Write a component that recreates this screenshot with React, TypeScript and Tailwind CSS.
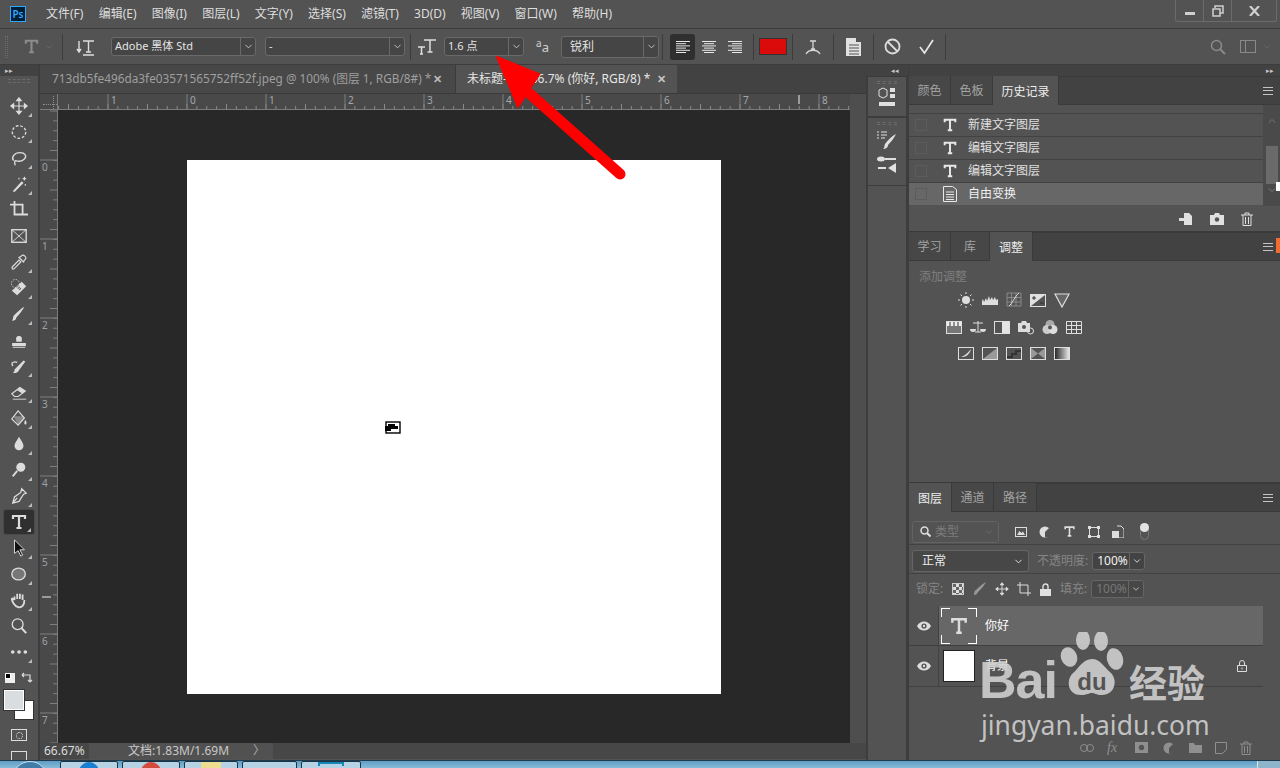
import type { ReactNode } from "react"
import { ChevronDown, ChevronUp } from "lucide-react"

const MENUS = ["文件(F)", "编辑(E)", "图像(I)", "图层(L)", "文字(Y)", "选择(S)", "滤镜(T)", "3D(D)", "视图(V)", "窗口(W)", "帮助(H)"]

function Ico({ children, size = 20, vb = 20, className = "" }: { children: ReactNode; size?: number; vb?: number; className?: string }) {
  return (
    <svg width={size} height={size} viewBox={`0 0 ${vb} ${vb}`} fill="none" stroke="currentColor" strokeWidth={1.5} className={`shrink-0 ${className}`}>
      {children}
    </svg>
  )
}

const TIcon = ({ size = 18 }: { size?: number }) => (
  <Ico size={size} vb={18}>
    <path d="M3 6V3h12v3M9 3v12M6.5 15h5" strokeWidth={2.2} />
  </Ico>
)

const TOOLS: { icon: ReactNode; corner?: boolean; active?: boolean }[] = [
  { icon: <path d="M10 2v16M2 10h16M10 1l-2.5 3h5zM10 19l-2.5-3h5zM1 10l3-2.5v5zM19 10l-3-2.5v5z" fill="currentColor" strokeWidth={1.3} /> },
  { icon: <ellipse cx="10" cy="10" rx="7.5" ry="7" strokeDasharray="3 2" /> },
  { icon: <path d="M4 13c-3-4 1-9 7-9s8 4 5 7-7 3-10 2c-2 1 0 5 0 5" /> },
  { icon: <><path d="M3 18L13 7l2 2L5 19z" fill="currentColor" stroke="none" /><path d="M16 2v4M14 4h4M10 3v2M17 10v2" strokeWidth={1.2} /></> },
  { icon: <path d="M0 4h14v12M5 0v15h15" strokeWidth={2} />, corner: false },
  { icon: <><rect x="2" y="3" width="16" height="14" /><path d="M2 3l16 14M18 3L2 17" strokeWidth={1} /></>, corner: false },
  { icon: <path d="M3 18c-1-1-1-2 0-3l7-7 2 2-7 7c-1 1-1 1-2 1zM10 5l5 5 1-2 1-1c2-2-2-6-4-4l-1 1z" strokeWidth={1.3} /> },
  { icon: <><path d="M2 13L13 3l5 5L8 18z" fill="currentColor" stroke="none" /><path d="M8 8l4 4" stroke="#535353" strokeWidth={3} strokeDasharray="1 1" /><circle cx="6" cy="5" r="4.5" strokeDasharray="1.5 1.5" strokeWidth={1} /></> },
  { icon: <path d="M4 12c3-3 8-8 12-10-2 4-6 9-9 12 0 3-3 4-5 3 2-1 1-3 2-5z" fill="currentColor" stroke="none" /> },
  { icon: <><path d="M7 10c-2-6 8-6 6 0v2H7z" fill="currentColor" stroke="none" /><path d="M3 14h14v2H3zM3 18h14" fill="currentColor" strokeWidth={1.2} /></>, corner: false },
  { icon: <><path d="M5 14L15 4l2 1-8 11c-2 2-5 2-6 1 2 0 2-1 2-3z" fill="currentColor" stroke="none" /><path d="M2 7c2-2 4-2 6-1M2 7l1 3" /></> },
  { icon: <><path d="M2 12l9-7 6 4-8 6H5z" strokeWidth={1.3} /><path d="M11 5l6 4-3 3-6-4z" fill="currentColor" stroke="none" /><path d="M3 18h15" strokeWidth={1} /></> },
  { icon: <><path d="M9 2L2 11l7 7 7-8z" strokeWidth={1.3} /><path d="M4 8h11l1 2-7 8z" fill="currentColor" stroke="none" opacity={0.4} /><path d="M17 12c1 2 2 3 1 5-2 1-3-1-1-5z" fill="currentColor" stroke="none" /></> },
  { icon: <path d="M10 2c2 4 5 7 5 10a5 5 0 0 1-10 0c0-3 3-6 5-10z" fill="currentColor" stroke="none" /> },
  { icon: <><circle cx="12" cy="7" r="5" fill="currentColor" stroke="none" /><path d="M8 11l-5 6" strokeWidth={2} /></> },
  { icon: <path d="M13 2l5 5-3 1-5 8-7 2 2-7 7-5zM3 18l5-6M10 10h.1" strokeWidth={1.4} /> },
  { icon: <TIcon size={20} />, active: true },
  { icon: <path d="M5 1v15l4-3 3 6 2-1-3-6h5z" fill="#111" stroke="#e4e4e4" strokeWidth={1} /> },
  { icon: <ellipse cx="9.5" cy="10" rx="7.5" ry="6.5" fill="#777" /> },
  { icon: <path d="M5 10V6M8 9V3M11 9V3M14 10V4M5 10c0 0-3-3-3-1s3 8 7 9 7-2 7-8" strokeWidth={2} /> },
  { icon: <><circle cx="8.5" cy="8" r="6" /><path d="M13 12.5l5 5.5" strokeWidth={2.2} /></>, corner: false },
  { icon: <path d="M3 10h.1M10 10h.1M17 10h.1" strokeWidth={4} strokeLinecap="round" /> },
]

function Toolbar() {
  return (
    <div className="w-[40px] shrink-0 flex flex-col overflow-hidden bg-[#535353] border-r-2 border-[#3d3d3d] text-[#dcdcdc]">
      <div className="h-[11px] shrink-0 bg-[#424242] text-[7px] leading-[11px] pl-[5px] text-[#c8c8c8]">▸▸</div>
      <div className="h-[17px] shrink-0 flex justify-center pt-[3px]">
        <div className="w-[22px] h-[4px] border-y border-[#6a6a6a] border-dashed" />
      </div>
      {TOOLS.map((t, i) => (
        <div key={i} className={`relative h-[26px] shrink-0 flex items-center justify-center mx-[3px] ${t.active ? "bg-[#303030] rounded-[3px] border border-[#4a4a4a]" : ""}`}>
          <Ico size={18}>{t.icon}</Ico>
          {t.corner !== false && (
            <svg width="4" height="4" viewBox="0 0 4 4" className="absolute right-[3px] bottom-[2px]"><path d="M4 0v4H0z" fill="#bbb" /></svg>
          )}
        </div>
      ))}
      <div className="h-[18px] shrink-0 flex items-center justify-between px-[5px] mt-[4px]">
        <div className="relative w-[10px] h-[10px] bg-[#eee]"><div className="w-[6px] h-[6px] bg-black border border-white" /></div>
        <Ico size={12} vb={12}><path d="M1 3h8v7M1 3l2-2M1 3l2 2M9 10l-2-2M9 10l2-2" strokeWidth={1.2} /></Ico>
      </div>
      <div className="relative h-[30px] shrink-0 mt-[3px] ml-[4px]">
        <div className="absolute left-[10px] top-[10px] w-[20px] h-[20px] bg-white border border-[#333]" />
        <div className="absolute left-0 top-0 w-[20px] h-[20px] bg-[#d9dde0] border border-white outline outline-1 outline-[#333]" />
      </div>
      <div className="flex justify-center shrink-0 mt-[9px]">
        <div className="w-[16px] h-[12px] border border-[#ddd] flex items-center justify-center"><div className="w-[7px] h-[7px] rounded-full border border-dotted border-[#ddd]" /></div>
      </div>
      <div className="flex justify-center shrink-0 mt-[10px]">
        <div className="w-[16px] h-[12px] border border-[#ddd]" />
      </div>
    </div>
  )
}

function Select({ label, w, h = 19, ml = 0, arrowW = 15, textClass = "text-[11px] pl-[3px]" }: { label: string; w: number; h?: number; ml?: number; arrowW?: number; textClass?: string }) {
  return (
    <div style={{ width: w, height: h, marginLeft: ml }} className="shrink-0 flex items-center rounded-[3px] border border-[#696969] bg-[#454545]">
      <span className={`flex-1 text-[#e4e4e4] whitespace-nowrap overflow-hidden ${textClass}`}>{label}</span>
      <span style={{ width: arrowW }} className="h-full border-l border-[#696969] flex items-center justify-center text-[#c8c8c8]">
        <ChevronDown size={11} />
      </span>
    </div>
  )
}

const Sep = ({ ml }: { ml: number }) => <div style={{ marginLeft: ml }} className="w-px h-[26px] bg-[#3c3c3c] shrink-0" />

function AlignIcon({ mode }: { mode: "l" | "c" | "r" }) {
  const rows = [14, 10, 14, 10, 14, 10]
  return (
    <svg width="16" height="14" viewBox="0 0 16 14" stroke="#e8e8e8" strokeWidth="1">
      {rows.map((w, i) => {
        const x = mode === "l" ? 1 : mode === "c" ? (16 - w) / 2 : 15 - w
        return <line key={i} x1={x} x2={x + w} y1={1.5 + i * 2.2} y2={1.5 + i * 2.2} />
      })}
    </svg>
  )
}

function OptionsBar() {
  return (
    <div className="h-[37px] shrink-0 flex items-center bg-[#535353] border-t border-[#3d3d3d] border-b border-b-[#3d3d3d]">
      <div className="ml-[5px] w-[3px] h-[22px] border-x border-dotted border-[#6c6c6c] shrink-0" />
      <div className="ml-[15px] text-[#8c8c8c]"><TIcon size={17} /></div>
      <ChevronDown size={10} className="ml-[4px] text-[#707070] shrink-0" />
      <Sep ml={8} />
      <div className="ml-[13px] w-[20px] text-[#dedede] shrink-0">
        <Ico size={20}>
          <path d="M7 4h11M12.5 4v11M10 15h5M3 4v10M1 12l2 3 2-3M7 18h11" strokeWidth={1.4} />
        </Ico>
      </div>
      <Select label="Adobe 黑体 Std" w={145} ml={15} />
      <Select label="-" w={140} ml={9} />
      <Sep ml={5} />
      <div className="ml-[6px] text-[#dedede] shrink-0">
        <Ico size={20}>
          <path d="M7 3h12M13 3v12M10.5 15h5M1 10h7M4.500 10v7M3 17h3" strokeWidth={1.5} />
        </Ico>
      </div>
      <Select label="1.6 点" w={80} ml={7} textClass="text-[11px] pl-[3px]" />
      <div className="ml-[12px] w-[15px] text-[11px] leading-none text-[#d0d0d0] shrink-0 -mt-[4px]">
        <span className="align-top text-[10px]">a</span><span className="text-[13px] relative top-[3px]">a</span>
      </div>
      <Select label="锐利" w={98} h={22} ml={10} textClass="text-[12px] pl-[8px]" />
      <Sep ml={3} />
      <div className="ml-[7px] w-[25px] h-[26px] bg-[#2f2f2f] rounded-[3px] flex items-center justify-center shrink-0"><AlignIcon mode="l" /></div>
      <div className="ml-[4px] w-[20px] flex justify-center shrink-0"><AlignIcon mode="c" /></div>
      <div className="ml-[6px] w-[20px] flex justify-center shrink-0"><AlignIcon mode="r" /></div>
      <Sep ml={8} />
      <div className="ml-[5px] w-[28px] h-[17px] bg-[#dc0b0b] border border-[#333] shrink-0" />
      <Sep ml={5} />
      <div className="ml-[11px] text-[#d6d6d6] shrink-0">
        <Ico size={18} vb={18}><path d="M6 3h6M9 3v8M7 11h4M2 16c3-5 11-5 14 0" strokeWidth={1.3} /></Ico>
      </div>
      <Sep ml={11} />
      <div className="ml-[11px] shrink-0 text-[#e2e2e2]">
        <svg width="17" height="20" viewBox="0 0 17 20"><path d="M1 1h10v4h5v14H1z" fill="currentColor" /><path d="M4 8h10M4 11h10M4 14h10M4 17h10" stroke="#535353" /></svg>
      </div>
      <Sep ml={11} />
      <div className="ml-[10px] text-[#dcdcdc] shrink-0">
        <Ico size={17} vb={17}><circle cx="8.500" cy="8.500" r="7" strokeWidth={1.8} /><path d="M3.500 3.500l10 10" strokeWidth={1.8} /></Ico>
      </div>
      <div className="ml-[17px] text-[#e6e6e6] shrink-0">
        <Ico size={17} vb={17}><path d="M2 9l4.500 6L15 2" strokeWidth={1.7} /></Ico>
      </div>
      <Sep ml={10} />
      <div className="flex-1" />
      <div className="text-[#8a8a8a] shrink-0">
        <Ico size={16} vb={16}><circle cx="6.500" cy="6.500" r="5" /><path d="M10 10l5 5" strokeWidth={2} /></Ico>
      </div>
      <div className="ml-[14px] w-[16px] h-[13px] border border-[#8a8a8a] shrink-0"><div className="w-[5px] h-full border-r border-[#8a8a8a]" /></div>
      <ChevronDown size={10} className="ml-[6px] mr-[8px] text-[#6c6c6c] shrink-0" />
    </div>
  )
}

function HRuler() {
  const ticks = []
  const labels = ["1", "0", "1", "2", "3", "4", "5", "6", "7", "8"]
  for (let i = 0; i < 84; i++) {
    const x = 108 - 40 - 18 - 9.875 * 6 + i * 9.875
    if (x >= 0) ticks.push(<line key={i} x1={x} x2={x} y1={i % 4 === 2 ? 10 : 12} y2={16} stroke="#8a8a8a" />)
  }
  return (
    <svg width="792" height="16" className="block bg-[#494949]">
      {ticks}
      {labels.map((l, i) => {
        const x = 50 + i * 79
        return (
          <g key={i}>
            <line x1={x} x2={x} y1={0} y2={16} stroke="#7e7e7e" />
            <text x={x + 3} y={10} fontSize="10" fill={i === 0 ? "#a9a9a9" : "#a4a8ac"} fontFamily="Noto Sans">{l}</text>
          </g>
        )
      })}
      <line x1={741} x2={741} y1={1} y2={10} stroke="#eee" />
      <line x1="0" x2="792" y1="15.500" y2="15.500" stroke="#7c7c7c" />
    </svg>
  )
}

function VRuler() {
  const ticks = []
  for (let i = 0; i < 66; i++) {
    const y = i * 9.875 + 1
    ticks.push(<line key={i} x1={(i + 1) % 4 === 1 ? 10 : 13} x2={18} y1={y} y2={y} stroke="#7e7e7e" />)
  }
  return (
    <svg width="18" height="633" className="block bg-[#494949] shrink-0">
      {ticks}
      {["0", "1", "2", "3", "4", "5", "6", "7"].map((l, i) => {
        const y = 50 + i * 79
        return (
          <g key={i}>
            <line x1={0} x2={18} y1={y} y2={y} stroke="#7e7e7e" />
            <text x={2} y={y + 11} fontSize="10" fill="#9aa2ab" fontFamily="Noto Sans">{l}</text>
          </g>
        )
      })}
      <line x1={2} x2={11} y1={487} y2={487} stroke="#eee" />
      <line x1="17.500" x2="17.500" y1="0" y2="633" stroke="#7c7c7c" />
    </svg>
  )
}

function Document() {
  return (
    <div className="w-[826px] shrink-0 flex flex-col bg-[#535353]">
      <div className="h-[29px] flex bg-[#424242] text-[12px] border-b border-[#3a3a3a]">
        <div className="w-[416px] flex items-center pl-[12px] bg-[#484848] text-[#9f9f9f] border-r border-[#3a3a3a] whitespace-nowrap">
          <span className="flex-1 text-[11.8px]">713db5fe496da3fe03571565752ff52f.jpeg @ 100% (图层 1, RGB/8#) *</span>
          <span className="w-[22px] text-[#bbb] text-[11px] font-bold">✕</span>
        </div>
        <div className="w-[221px] flex items-center pl-[11px] bg-[#535353] text-[#e6e6e6] whitespace-nowrap">
          <span className="flex-1">未标题-1 @ 66.7% (你好, RGB/8) *</span>
          <span className="w-[20px] text-[#c4c4c4] text-[11px] font-bold">✕</span>
        </div>
      </div>
      <div className="flex h-[16px]">
        <div className="relative w-[18px] h-[16px] bg-[#494949] shrink-0 border-b border-r border-[#7c7c7c]">
          <div className="absolute left-[3px] right-0 top-[10px] border-t border-dotted border-[#8c8c8c]" />
          <div className="absolute top-[2px] bottom-0 left-[13px] border-l border-dotted border-[#8c8c8c]" />
        </div>
        <HRuler />
        <div className="flex-1 bg-[#4e4e4e]" />
      </div>
      <div className="flex h-[633px]">
        <VRuler />
        <div className="w-[792px] h-full bg-[#282828] pl-[129px] pt-[50px] shrink-0">
          <div className="relative w-[534px] h-[534px] bg-white">
            <svg width="16" height="13" viewBox="0 0 16 13" className="absolute left-[198px] top-[261px]">
              <rect x="1" y="1" width="14" height="11" fill="#fff" stroke="#000" strokeWidth="1.400" />
              <path d="M0 5h3V3h7v2h3v3H6v2H0z" fill="#000" />
            </svg>
          </div>
        </div>
        <div className="flex-1 bg-[#4e4e4e]" />
      </div>
      <div className="h-[16px] flex items-center bg-[#474747] text-[12px] text-[#dcdcdc] leading-none">
        <div className="w-[49px] pl-[4px]">66.67%</div>
        <div className="w-[184px] h-full bg-[#515151] flex items-center pl-[39px] text-[#c8c8c8] relative">
          文档:1.83M/1.69M
          <span className="absolute right-[8px] text-[#aaa]">〉</span>
        </div>
      </div>
    </div>
  )
}

function Dock() {
  return (
    <div className="w-[42px] shrink-0 flex flex-col bg-[#535353] border-x-2 border-[#3d3d3d] text-[#e0e0e0]">
      <div className="h-[12px] -mx-[2px] bg-[#424242] text-[7px] leading-[11px] text-right pr-[9px] text-[#c8c8c8] border-b border-[#3a3a3a]">◂◂</div>
      <div className="h-[41px] border-b-2 border-[#3d3d3d] flex flex-col items-center pt-[4px]">
        <div className="w-[20px] h-[3px] border-y border-dashed border-[#6a6a6a]" />
        <svg width="18" height="20" viewBox="0 0 18 20" className="mt-[3px]">
          <path d="M1 3l4-2 4 2v6l-4 2-4-2z" stroke="currentColor" fill="none" />
          <path d="M12 1h5v4h-5zM12 7h5v4h-5zM1 15h16v4H1z" fill="currentColor" />
        </svg>
      </div>
      <div className="h-[68px] border-b border-[#3d3d3d] flex flex-col items-center pt-[4px]">
        <div className="w-[20px] h-[3px] border-y border-dashed border-[#6a6a6a]" />
        <svg width="22" height="20" viewBox="0 0 22 20" className="mt-[5px]">
          <path d="M1 2h2M1 5h2M1 8h2M5 2h6M5 5h6M5 8h4" stroke="currentColor" />
          <path d="M9 14c3-4 7-8 11-10-2 4-5 8-8 11 0 3-3 4-5 4 2-1 1-3 2-5z" fill="currentColor" />
        </svg>
        <svg width="22" height="18" viewBox="0 0 22 18" className="mt-[6px]">
          <ellipse cx="5" cy="3" rx="4" ry="2.500" fill="currentColor" /><path d="M9 3h11M2 12h8" stroke="currentColor" strokeWidth="2" />
          <path d="M20 7v10l-8-5z" fill="currentColor" />
        </svg>
      </div>
    </div>
  )
}

function Hamburger() {
  return <div className="w-[10px] h-[8px] border-y border-[#c4c4c4] relative shrink-0"><div className="absolute left-0 right-0 top-[2.5px] border-t border-[#c4c4c4]" /></div>
}

function PanelTabs({ tabs }: { tabs: { label: string; w: number; active?: boolean }[] }) {
  return (
    <div className="h-[28px] shrink-0 flex items-end bg-[#424242] border-b border-[#3a3a3a] text-[12px]">
      {tabs.map((t) => (
        <div key={t.label} style={{ width: t.w }} className={`h-[28px] pt-[2px] flex items-center justify-center border-r border-[#3a3a3a] ${t.active ? "bg-[#535353] text-[#eeeeee] h-[29px] -mb-px" : "bg-[#474747] text-[#a3a3a3]"}`}>
          {t.label}
        </div>
      ))}
      <div className="flex-1 self-center flex justify-end pr-[7px]"><Hamburger /></div>
    </div>
  )
}

const HISTORY = [
  { label: "新建文字图层" },
  { label: "编辑文字图层" },
  { label: "编辑文字图层" },
  { label: "自由变换", active: true },
]

function HistoryPanel() {
  return (
    <div className="h-[156px] shrink-0 flex flex-col border-b-2 border-[#3a3a3a]">
      <PanelTabs tabs={[{ label: "颜色", w: 42 }, { label: "色板", w: 42 }, { label: "历史记录", w: 66, active: true }]} />
      <div className="flex h-[101px]">
        <div className="w-[354px] pt-[8px]">
          {HISTORY.map((h, i) => (
            <div key={i} className={`h-[23px] flex items-center border-t border-[#424242] text-[12px] ${h.active ? "bg-[#676767] text-[#f0f0f0]" : "text-[#e0e0e0]"}`}>
              <div className="ml-[6px] w-[12px] h-[12px] border border-[#5c5c5c]" />
              <div className="ml-[14px] w-[18px] flex justify-center text-[#e8e8e8]">
                {h.active ? (
                  <svg width="14" height="16" viewBox="0 0 14 16"><path d="M.5.5h9l4 3v12H.5z" fill="none" stroke="currentColor" /><path d="M3 6h8M3 8.500h8M3 11h8M3 13.500h8" stroke="currentColor" /></svg>
                ) : <TIcon size={16} />}
              </div>
              <span className="ml-[9px]">{h.label}</span>
            </div>
          ))}
        </div>
        <div className="relative flex-1 bg-[#4a4a4a] flex flex-col items-center text-[#777]">
          <ChevronUp size={12} className="mt-[10px]" />
          <div className="mt-[19px] w-[12px] h-[38px] bg-[#6a6a6a]" />
          <ChevronDown size={12} />
          <div className="absolute right-0 top-[77px] w-[4px] h-[9px] bg-white" />
        </div>
      </div>
      <div className="flex-1 flex items-center justify-end pr-[27px] gap-[17px] text-[#e0e0e0]">
        <svg width="15" height="14" viewBox="0 0 15 14"><path d="M6 1h5l3 3v9H6V9H1V6h5z" fill="currentColor" /></svg>
        <svg width="14" height="12" viewBox="0 0 14 12"><path d="M0 2h4l1-2h4l1 2h4v10H0z" fill="currentColor" /><circle cx="7" cy="6.500" r="2.200" fill="#535353" /></svg>
        <svg width="12" height="14" viewBox="0 0 12 14" fill="none" stroke="currentColor"><path d="M0 3h12M4 3V1h4v2M2 3v10.500h8V3M4.500 5v7M7.500 5v7" /></svg>
      </div>
    </div>
  )
}

const ADJ: ReactNode[][] = [
  [
    <><circle cx="8" cy="8" r="4" fill="currentColor" stroke="none" /><path d="M8 0v2M8 14v2M0 8h2M14 8h2M2.500 2.500L4 4M12 12l1.500 1.500M13.500 2.500L12 4M4 12l-1.500 1.500" strokeWidth={1} /></>,
    <path d="M0 13V9l1-2 1 3 2-4 1 3 2-5 1 4 2-3 1 3 2-3 1 3 2-1v6z" fill="currentColor" stroke="none" />,
    <><path d="M1 1h14v13H1zM1 5.500h14M1 10h14M5.500 1v13M10 1v13" stroke="#8a8a8a" strokeWidth={1} /><path d="M3 14C6 12 9 4 13 1" strokeWidth={1} /></>,
    <><rect x="0" y="2" width="16" height="13" fill="#e0e0e0" stroke="none" /><path d="M1 14L15 3v11z" fill="#535353" stroke="none" /><path d="M2 6h4M4 4v4M10 11h4" stroke="#333" strokeWidth={1} /></>,
    <path d="M1 2h14L8 15z" fill="#666" stroke="#ddd" strokeWidth={1.2} />,
  ],
  [
    <><rect x="0.500" y="2.500" width="15" height="12" fill="#eee" stroke="#ddd" strokeWidth={1} /><rect x="1" y="7" width="14" height="7" fill="#777" stroke="none" /><path d="M4 3v4M8 3v4M12 3v4" stroke="#333" strokeWidth={1} /></>,
    <><path d="M8 2v11M3 4h10M5 13h6" strokeWidth={1} /><path d="M0 10h6a3 3 0 0 1-6 0zM10 10h6a3 3 0 0 1-6 0z" fill="currentColor" stroke="none" /></>,
    <><rect x="0.500" y="2.500" width="15" height="12" strokeWidth={1} /><rect x="8" y="3" width="7" height="11" fill="#e4e4e4" stroke="none" /></>,
    <><path d="M0 4h3l1-2h4l1 2h3v9H0z" fill="#ddd" stroke="none" /><circle cx="6" cy="8" r="2" fill="#555" stroke="none" /><circle cx="12.500" cy="12" r="3" strokeWidth={1} /></>,
    <><circle cx="8" cy="5.500" r="4.500" fill="#aaa" stroke="none" /><circle cx="5" cy="10.500" r="4.500" fill="#ccc" stroke="none" /><circle cx="11" cy="10.500" r="4.500" fill="#ddd" stroke="none" /><circle cx="8" cy="8.500" r="2" fill="#555" stroke="none" /></>,
    <path d="M.5 2.500h15v12H.5zM.5 6.500h15M.5 10.500h15M5.500 2.500v12M10.500 2.500v12" strokeWidth={1} />,
  ],
  [
    <><rect x="0.500" y="2.500" width="15" height="12" strokeWidth={1} /><path d="M3 12c3-1 7-4 10-8-1 4-4 8-8 8z" fill="#ddd" stroke="none" /></>,
    <><rect x="0.500" y="2.500" width="15" height="12" strokeWidth={1} /><path d="M1 14L15 3v11z" fill="#999" stroke="none" /></>,
    <><rect x="0.500" y="2.500" width="15" height="12" strokeWidth={1} /><path d="M1 12h5V9h4V6h5" strokeWidth={2} stroke="#333" /></>,
    <><rect x="0.500" y="2.500" width="15" height="12" strokeWidth={1} /><path d="M1 3l7 5.500L1 14zM15 3L8 8.500 15 14z" fill="#999" stroke="none" /></>,
    <><defs><linearGradient id="grad" x1="0" x2="1"><stop offset="0" stopColor="#222" /><stop offset="1" stopColor="#eee" /></linearGradient></defs><rect x="0.500" y="2.500" width="15" height="12" fill="url(#grad)" strokeWidth={1} /></>,
  ],
]

function AdjustPanel() {
  return (
    <div className="h-[251px] shrink-0 flex flex-col border-b-2 border-[#3a3a3a]">
      <PanelTabs tabs={[{ label: "学习", w: 42 }, { label: "库", w: 39 }, { label: "调整", w: 43, active: true }]} />
      <div className="relative flex-1 pl-[10px] pt-[7px]">
        <div className="text-[12px] text-[#7f7f7f] leading-[18px]">添加调整</div>
        <div className="absolute right-0 top-[-23px] w-[4px] h-[15px] bg-[#f26c2f]" />
        <div className="w-[190px] flex flex-col items-center text-[#dedede] mt-[6px] gap-[10.5px]">
          {ADJ.map((row, i) => (
            <div key={i} className="flex gap-[8px]">
              {row.map((a, j) => <Ico key={j} size={16} vb={16}>{a}</Ico>)}
            </div>
          ))}
        </div>
      </div>
    </div>
  )
}

function Eye() {
  return (
    <svg width="14" height="10" viewBox="0 0 14 10"><path d="M0 5c3-6 11-6 14 0-3 6-11 6-14 0z" fill="#ddd" /><circle cx="7" cy="5" r="2.600" fill="#535353" /><circle cx="7" cy="5" r="1.200" fill="#ddd" /></svg>
  )
}

function LayersPanel() {
  return (
    <div className="flex-1 flex flex-col relative">
      <PanelTabs tabs={[{ label: "图层", w: 43, active: true }, { label: "通道", w: 42 }, { label: "路径", w: 43 }]} />
      <div className="h-[33px] flex items-center border-b border-[#424242] pl-[3px] pt-[7px] shrink-0">
        <div className="w-[87px] h-[22px] flex items-center border border-[#636363] rounded-[3px] pl-[7px] text-[12px] text-[#7d7d7d]">
          <svg width="11" height="11" viewBox="0 0 11 11" fill="none" stroke="#ddd"><circle cx="4.500" cy="4.500" r="3.500" strokeWidth="1.500" /><path d="M7 7l3.500 3.500" strokeWidth="2" /></svg>
          <span className="ml-[4px] flex-1">类型</span>
          <ChevronDown size={10} className="mr-[4px] text-[#6f6f6f]" />
        </div>
        <div className="ml-[16px] flex items-center gap-[12px] text-[#dedede]">
          <svg width="12" height="10" viewBox="0 0 12 10"><rect x=".5" y=".5" width="11" height="9" fill="none" stroke="currentColor" /><path d="M2 8l2.500-4 2 2 1.500-1.500L10 8z" fill="currentColor" /></svg>
          <svg width="12" height="12" viewBox="0 0 12 12"><circle cx="6" cy="6" r="5.500" fill="currentColor" /><path d="M6 6l4-4a5 5 0 0 1-4 9z" fill="#535353" /></svg>
          <TIcon size={13} />
          <svg width="12" height="12" viewBox="0 0 12 12" fill="none" stroke="currentColor"><rect x="1.500" y="1.500" width="9" height="9" /><path d="M0 0h3v3H0zM9 0h3v3H9zM0 9h3v3H0zM9 9h3v3H9z" fill="currentColor" stroke="none" /></svg>
          <svg width="12" height="13" viewBox="0 0 12 13"><path d="M5 1h4l3 3v9H7" fill="none" stroke="currentColor" /><rect x="0" y="6" width="7" height="7" fill="currentColor" /></svg>
          <div className="relative ml-[4px] w-[9px] h-[17px] border border-[#777] rounded-full"><div className="absolute -left-[1px] -top-[1px] w-[9px] h-[9px] rounded-full bg-[#e4e4e4]" /></div>
        </div>
      </div>
      <div className="h-[29px] flex items-center border-b border-[#424242] pl-[3px] pt-[4px] text-[12px] shrink-0">
        <div className="w-[117px] h-[22px] flex items-center justify-between rounded-[3px] border border-[#666] bg-[#474747] text-[#eaeaea] pl-[9px] pr-[4px]">
          正常<ChevronDown size={11} />
        </div>
        <span className="ml-[8px] text-[#858585] whitespace-nowrap">不透明度:</span>
        <div className="ml-[4px] w-[53px] h-[18px] flex items-center rounded-[3px] border border-[#666] bg-[#434343] text-[#f2f2f2] leading-none">
          <span className="flex-1 pl-[4px]">100%</span>
          <span className="w-[15px] h-full border-l border-[#666] flex items-center justify-center"><ChevronDown size={10} /></span>
        </div>
      </div>
      <div className="h-[30px] flex items-center pl-[7px] text-[12px] text-[#858585] shrink-0">
        <span className="w-[36px]">锁定:</span>
        <div className="w-[12px] h-[12px] bg-[conic-gradient(#ddd_25%,#666_0_50%,#ddd_0_75%,#666_0)] bg-[length:6px_6px] border border-[#ccc]" />
        <svg width="14" height="14" viewBox="0 0 14 14" className="ml-[9px] text-[#999]"><path d="M1 13c0-3 1-5 2-5 3-3 6-6 10-8-2 4-5 7-8 10-1 2-2 3-4 3z" fill="currentColor" /></svg>
        <div className="ml-[8px] text-[#e0e0e0]"><Ico size={14} vb={20}>{TOOLS[0].icon}</Ico></div>
        <svg width="14" height="14" viewBox="0 0 14 14" fill="none" stroke="#ddd" className="ml-[8px]"><path d="M0 3h11v11M3 0v11h11" /></svg>
        <svg width="11" height="13" viewBox="0 0 11 13" className="ml-[9px]"><path d="M3 6V3.500a2.500 2.500 0 0 1 5 0V6" fill="none" stroke="#e0e0e0" strokeWidth="1.400" /><rect y="6" width="11" height="7" fill="#e0e0e0" /></svg>
        <span className="ml-[9px] whitespace-nowrap">填充:</span>
        <div className="ml-[4px] w-[53px] h-[18px] flex items-center rounded-[3px] border border-[#666] bg-[#474747] text-[#777] leading-none">
          <span className="flex-1 pl-[4px]">100%</span>
          <span className="w-[15px] h-full border-l border-[#666] flex items-center justify-center text-[#ccc]"><ChevronDown size={10} /></span>
        </div>
      </div>
      <div className="flex-1 w-[354px] pt-[2px]">
        <div className="h-[40px] flex border-b border-[#3f3f3f]">
          <div className="w-[30px] flex items-center justify-center border-r border-[#424242]"><Eye /></div>
          <div className="flex-1 flex items-center bg-[#676767] text-[12px] text-white">
            <div className="relative ml-[2px] w-[36px] h-[36px] flex items-center justify-center text-[#ddd]">
              <TIcon size={20} />
              <div className="absolute left-0 top-0 w-[9px] h-[9px] border-l border-t border-white" />
              <div className="absolute right-0 top-0 w-[9px] h-[9px] border-r border-t border-white" />
              <div className="absolute left-0 bottom-0 w-[9px] h-[9px] border-l border-b border-white" />
              <div className="absolute right-0 bottom-0 w-[9px] h-[9px] border-r border-b border-white" />
            </div>
            <span className="ml-[8px]">你好</span>
          </div>
        </div>
        <div className="h-[41px] flex items-center border-b border-[#424242] text-[12px] text-white">
          <div className="w-[30px] h-full flex items-center justify-center border-r border-[#424242]"><Eye /></div>
          <div className="ml-[4px] w-[32px] h-[32px] bg-white border border-[#222]" />
          <span className="ml-[10px] flex-1">背景</span>
          <svg width="10" height="12" viewBox="0 0 10 12" className="mr-[16px]" fill="none" stroke="#ddd"><path d="M2.500 5V3a2.500 2.500 0 0 1 5 0v2M.5 5.500h9v6h-9z" /><path d="M5 7.500v2" /></svg>
        </div>
      </div>
      <div className="h-[25px] flex items-center justify-end pr-[28px] gap-[13px] text-[#8f8f8f] shrink-0">
        <svg width="14" height="8" viewBox="0 0 14 8" fill="none" stroke="currentColor"><rect x=".5" y=".5" width="7" height="7" rx="3.500" /><rect x="6.500" y=".5" width="7" height="7" rx="3.500" /></svg>
        <span className="w-[15px] text-[14px] italic font-['Liberation_Serif',serif] leading-none">fx</span>
        <svg width="13" height="11" viewBox="0 0 13 11"><rect width="13" height="11" fill="currentColor" /><circle cx="6.500" cy="5.500" r="2.700" fill="#535353" /></svg>
        <div className="w-[15px] flex justify-center"><svg width="12" height="12" viewBox="0 0 12 12"><circle cx="6" cy="6" r="5.500" fill="currentColor" /><path d="M6 6l4-4a5 5 0 0 1-4 9z" fill="#535353" /></svg></div>
        <svg width="13" height="10" viewBox="0 0 13 10"><path d="M0 0h5l1 2h7v8H0z" fill="currentColor" /></svg>
        <svg width="12" height="12" viewBox="0 0 12 12" fill="none" stroke="currentColor"><path d="M.5.5h11v7l-4 4h-7z" /></svg>
        <svg width="12" height="14" viewBox="0 0 12 14" fill="none" stroke="currentColor"><path d="M0 3h12M4 3V1h4v2M2 3v10.500h8V3M4.500 5v7M7.500 5v7" /></svg>
      </div>
      {/* watermark sits over the layer list */}
      <div className="absolute left-[72px] top-[153px] w-[232px] text-[#cfcfcf] pointer-events-none opacity-90">
        <div className="flex items-end h-[66px]">
          <span className="text-[52px] font-bold leading-[46px] font-['Liberation_Sans',sans-serif] -ml-[2px] tracking-[-1px]">Bai</span>
          <svg width="66" height="72" viewBox="0 0 66 72" className="ml-[2px] shrink-0 -mb-[1px]">
            <ellipse cx="10" cy="25" rx="8" ry="10" fill="currentColor" transform="rotate(-20 10 25)" />
            <ellipse cx="24" cy="8" rx="7" ry="10" fill="currentColor" />
            <ellipse cx="42" cy="9" rx="7" ry="10" fill="currentColor" />
            <ellipse cx="56" cy="27" rx="8" ry="11" fill="currentColor" transform="rotate(-15 56 27)" />
            <path d="M33 27c8 0 12 8 19 14 7 7 4 22-9 22-6 0-7-2-10-2s-5 2-11 2C9 63 7 49 13 42c7-6 11-15 20-15z" fill="currentColor" />
            <text x="33" y="58" textAnchor="middle" fontSize="24" fontWeight="700" fontFamily="Liberation Sans" fill="#555">du</text>
          </svg>
          <span className="text-[38px] font-bold leading-[44px] font-['Noto_Sans_CJK_SC',sans-serif] ml-[4px] whitespace-nowrap">经验</span>
        </div>
        <div className="mt-[7px] text-[26.4px] leading-[30px] font-['Noto_Sans',sans-serif] whitespace-nowrap">jingyan.baidu.com</div>
      </div>
    </div>
  )
}

function Taskbar() {
  const btns = [58, 58, 54, 55, 60]
  return (
    <div className="h-[8px] shrink-0 flex bg-gradient-to-b from-[#5f9cc4] to-[#86bcd9] border-t border-[#1d3a4f] overflow-hidden">
      <div className="w-[60px] flex justify-center"><div className="w-[36px] h-[36px] rounded-full bg-[#3f7da8] border border-[#cfe3ef]" /></div>
      {btns.map((w, i) => (
        <div key={i} style={{ width: w }} className="shrink-0 mr-[4px] h-[8px] bg-[#b5d3e4] border border-[#1c3344] rounded-t-[2px] flex justify-center">
          {i === 0 && <div className="w-[20px] h-[20px] rounded-full bg-[#1b7fd1]" />}
          {i === 1 && <div className="w-[20px] h-[20px] rounded-full bg-[#d24b3d]" />}
          {i === 2 && <div className="w-[20px] h-[20px] bg-[#f0dc8e]" />}
          {i === 4 && <div className="w-[26px] h-[4px] border-2 border-[#1487b8] border-b-0" />}
        </div>
      ))}
      <div className="flex-1" />
      <div className="w-[23px] bg-[#8fb5cc] border-l border-[#d7e6ef]" />
    </div>
  )
}

export default function App() {
  return (
    <div className="relative w-[1280px] h-[768px] overflow-hidden flex flex-col bg-[#535353] font-['Noto_Sans','Noto_Sans_CJK_SC',sans-serif]">
      <div className="h-[28px] shrink-0 flex items-center bg-[#535353] text-[12px] text-[#dedede]">
        <div className="ml-[10px] w-[16px] h-[16px] bg-[#001e36] border border-[#31a8ff] text-[#31a8ff] text-[10px] leading-[14px] text-center font-semibold">Ps</div>
        <div className="ml-[20px] flex gap-[15.2px] whitespace-nowrap">
          {MENUS.map((m) => <span key={m}>{m}</span>)}
        </div>
        <div className="ml-auto mr-[3px] -mt-[6px] w-[102px] h-[22px] flex items-center border border-t-0 border-[#6b6b6b] rounded-b-[3px] text-[#cfcfcf]">
          <div className="w-[28px] h-full flex items-center justify-center border-r border-[#6b6b6b]"><div className="w-[10px] h-[3px] bg-[#cfcfcf] mt-[6px]" /></div>
          <div className="w-[27px] h-full flex items-center justify-center">
            <svg width="12" height="12" viewBox="0 0 12 12" fill="none" stroke="currentColor" strokeWidth="1.500"><path d="M3 3V1h8v7H8M1 4h7v7H1z" /></svg>
          </div>
          <div className="flex-1 h-full flex items-center justify-center border-l border-[#6b6b6b]">
            <svg width="11" height="10" viewBox="0 0 11 10" stroke="currentColor" strokeWidth="2.200"><path d="M1 0l9 10M10 0L1 10" /></svg>
          </div>
        </div>
      </div>
      <OptionsBar />
      <div className="h-[695px] shrink-0 flex">
        <Toolbar />
        <Document />
        <Dock />
        <div className="flex-1 min-w-0 flex flex-col bg-[#535353] border-l border-[#3d3d3d]">
          <div className="h-[12px] shrink-0 bg-[#424242] text-[7px] leading-[11px] text-right pr-[6px] text-[#c8c8c8] border-b border-[#3a3a3a]">▸▸</div>
          <HistoryPanel />
          <AdjustPanel />
          <LayersPanel />
        </div>
      </div>
      <Taskbar />
      {/* annotation arrow drawn over the screenshot */}
      <svg width="1280" height="768" className="absolute left-0 top-0 pointer-events-none">
        <path d="M620 174L530 94" stroke="#fe0000" strokeWidth="11" strokeLinecap="round" />
        <path d="M496 56L540 74 518 108z" fill="#fe0000" stroke="#fe0000" strokeWidth="1" />
      </svg>
    </div>
  )
}
